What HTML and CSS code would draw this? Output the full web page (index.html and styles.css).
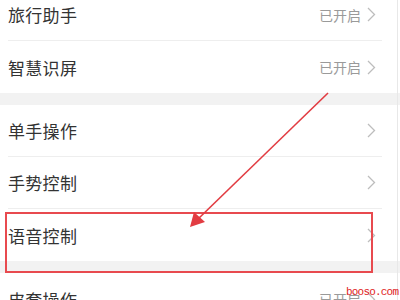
FILE: index.html
```html
<!DOCTYPE html>
<html lang="zh">
<head>
<meta charset="utf-8">
<link rel="stylesheet" href="styles.css">
</head>
<body>
<div class="screen">
  <div class="list">
    <div class="group">
      <div class="row"><span class="label">旅行助手</span><span class="value">已开启</span><svg class="chev" width="9" height="15" viewBox="0 0 9 15"><polyline points="1,1 7.5,7.5 1,14"/></svg></div>
      <div class="row"><span class="label">智慧识屏</span><span class="value">已开启</span><svg class="chev" width="9" height="15" viewBox="0 0 9 15"><polyline points="1,1 7.5,7.5 1,14"/></svg></div>
    </div>
    <div class="gap"></div>
    <div class="group">
      <div class="row"><span class="label">单手操作</span><svg class="chev" width="9" height="15" viewBox="0 0 9 15"><polyline points="1,1 7.5,7.5 1,14"/></svg></div>
      <div class="row"><span class="label">手势控制</span><svg class="chev" width="9" height="15" viewBox="0 0 9 15"><polyline points="1,1 7.5,7.5 1,14"/></svg></div>
      <div class="row"><span class="label">语音控制</span><svg class="chev" width="9" height="15" viewBox="0 0 9 15"><polyline points="1,1 7.5,7.5 1,14"/></svg></div>
    </div>
    <div class="gap"></div>
    <div class="group">
      <div class="row"><span class="label">皮套操作</span><span class="value">已开启</span><svg class="chev" width="9" height="15" viewBox="0 0 9 15"><polyline points="1,1 7.5,7.5 1,14"/></svg></div>
    </div>
  </div>
  <div class="edge"></div>
  <div class="highlight"></div>
  <svg class="arrow" width="400" height="300" viewBox="0 0 400 300">
    <line x1="328" y1="93" x2="197" y2="220"/>
    <polygon points="190,227 194,212 205,222"/>
  </svg>
  <div class="watermark">booso.com</div>
</div>
</body>
</html>
```
FILE: styles.css
```css
html, body {
  margin: 0;
  padding: 0;
  background: #fff;
}
.screen {
  position: relative;
  width: 400px;
  height: 300px;
  overflow: hidden;
  font-family: "Noto Sans CJK SC", "Noto Sans", sans-serif;
}
.list {
  margin-top: -11px;
}
.group {
  background: #fff;
}
.gap {
  height: 12px;
  background: #f2f2f2;
}
.row {
  box-sizing: border-box;
  height: 52px;
  margin: 0 18px 0 8px;
  display: flex;
  align-items: center;
  border-bottom: 1px solid #eeeeee;
}
.row:last-child {
  border-bottom: none;
}
.label {
  flex: 1;
  font-size: 17px;
  color: #333;
  letter-spacing: 0.3px;
}
.value {
  font-size: 14px;
  color: #9a9a9a;
  margin-right: 6px;
}
.chev {
  margin-right: 6px;
}
.chev polyline {
  fill: none;
  stroke: #bdbdbd;
  stroke-width: 1.3;
}
.edge {
  position: absolute;
  top: 0;
  left: 397px;
  width: 1px;
  height: 300px;
  background: #e8e8e8;
}
.highlight {
  position: absolute;
  left: 5px;
  top: 212px;
  width: 364px;
  height: 57px;
  border: 2px solid #e84a4f;
}
.arrow {
  position: absolute;
  left: 0;
  top: 0;
}
.arrow line {
  stroke: #e23c42;
  stroke-width: 1.6;
}
.arrow polygon {
  fill: #e23c42;
}
.watermark {
  position: absolute;
  left: 346px;
  top: 286px;
  font-family: "Liberation Mono", monospace;
  font-size: 11px;
  line-height: 12px;
  color: #e01e1e;
  letter-spacing: -0.8px;
}
```
